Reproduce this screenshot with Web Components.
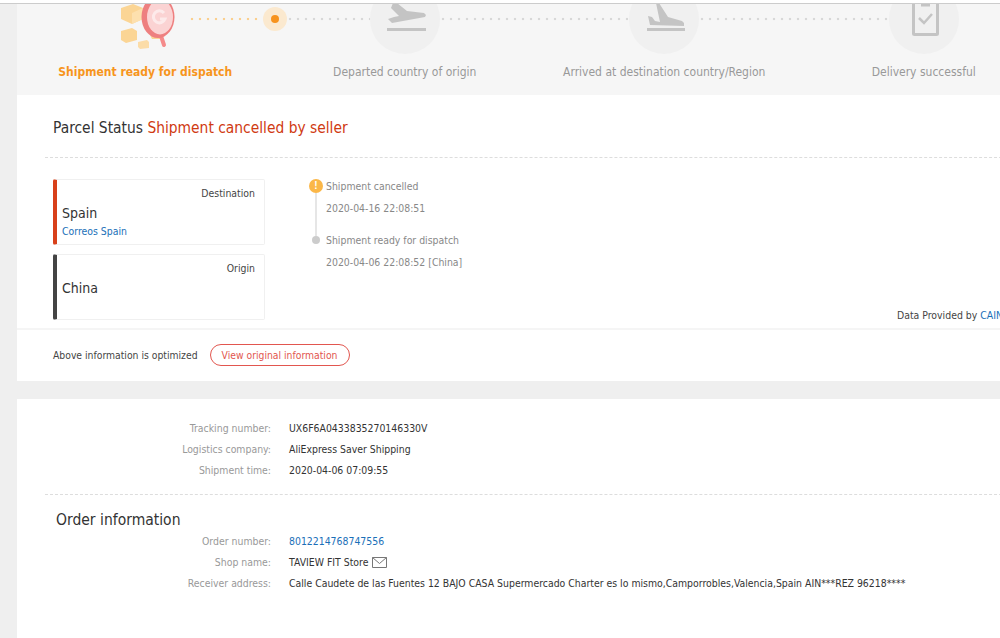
<!DOCTYPE html>
<html>
<head>
<meta charset="utf-8">
<title>Parcel tracking</title>
<style>
  html, body { margin: 0; height: 638px; overflow: hidden; background: #fff; }
  body { font-family: "DejaVu Sans Condensed", "DejaVu Sans", sans-serif; font-stretch: condensed; font-size: 12px; }
</style>
</head>
<body>
<tracking-page>
  <tracking-steps slot="upper"></tracking-steps>
  <parcel-card slot="upper">
    <route-card slot="routes" kind="Destination" country="Spain" carrier="Correos Spain" accent="#d8401a"></route-card>
    <route-card slot="routes" kind="Origin" country="China" accent="#444"></route-card>
    <track-event slot="events" state="alert" title="Shipment cancelled" time="2020-04-16 22:08:51"></track-event>
    <track-event slot="events" state="last" title="Shipment ready for dispatch" time="2020-04-06 22:08:52 [China]"></track-event>
  </parcel-card>
  <order-card slot="lower">
    <info-row slot="shipping" label="Tracking number:">UX6F6A0433835270146330V</info-row>
    <info-row slot="shipping" label="Logistics company:">AliExpress Saver Shipping</info-row>
    <info-row slot="shipping" label="Shipment time:">2020-04-06 07:09:55</info-row>
    <info-row slot="order" label="Order number:"><span style="color:#1a6fb8">8012214768747556</span></info-row>
    <info-row slot="order" label="Shop name:">TAVIEW FIT Store <svg width="15" height="11" viewBox="0 0 15 11" style="vertical-align:-2px;margin-left:1px" fill="none" stroke="#777"><path d="M.5.5h14v10H.5zM.5.5l7 6 7-6"/></svg></info-row>
    <info-row slot="order" label="Receiver address:">Calle Caudete de las Fuentes 12 BAJO CASA Supermercado Charter es lo mismo,Camporrobles,Valencia,Spain AIN***REZ 96218****</info-row>
  </order-card>
</tracking-page>

<script>
class TrackingPage extends HTMLElement {
  constructor() {
    super();
    this.attachShadow({ mode: 'open' });
    this.shadowRoot.innerHTML = `
      <style>
        :host { display: block; background: #efefef; height: 638px; }
        .topline { height: 3px; background: #fff; border-bottom: 1px solid #ccc; }
        .main { margin-left: 17px; display: flex; flex-direction: column; gap: 18px; width: 1040px; }
      </style>
      <div class="topline"></div>
      <div class="main">
        <div><slot name="upper"></slot></div>
        <slot name="lower"></slot>
      </div>
    `;
  }
}

class TrackingSteps extends HTMLElement {
  constructor() {
    super();
    this.attachShadow({ mode: 'open' });
    this.shadowRoot.innerHTML = `
      <style>
        :host { display: block; height: 91px; background: #f6f6f6; overflow: hidden; }
        .rail { display: flex; align-items: center; height: 70px; margin-top: -20px; padding-left: 93px; }
        .circle { width: 70px; height: 70px; flex: none; border-radius: 50%; background: #f0f0f0; }
        .circle svg, .pic { display: block; width: 70px; height: 70px; flex: none; }
        .dots { height: 4px; flex: none; background: radial-gradient(circle at 2px 2px, #d8d8d8 1.1px, transparent 1.6px) 0 0 / 8px 4px repeat-x; }
        .dots.on { background-image: radial-gradient(circle at 2px 2px, #fbcf8e 1.1px, transparent 1.6px); }
        .now { width: 24px; height: 24px; flex: none; border-radius: 50%; background: #fbe9cf; display: flex; align-items: center; justify-content: center; margin: 0 1px; }
        .now i { width: 8px; height: 8px; border-radius: 50%; background: #f7931e; }
        .labels { display: grid; grid-template-columns: repeat(4, 259.5px); margin: 10px 0 0 -1.5px; color: #999; font-size: 12px; line-height: 16px; text-align: center; white-space: nowrap; }
        .labels b { color: #f7951d; }
      </style>
      <div class="rail">
        <svg class="pic" viewBox="0 0 70 70">
          <path d="M11 24l12-4 10 4v11l-11 5-11-5z" fill="#fbd595"/>
          <path d="M22 29l11-5v11l-11 5z" fill="#fde0ae"/>
          <path d="M11 47l11-3 5 3v9l-11 3-5-3z" fill="#fbd595"/>
          <path d="M28 58l9-2 2 2v6l-9 1-2-2z" fill="#fbdca8"/>
          <path d="M40 51h10v4H42z" fill="#fbd595"/>
          <path d="M51 52l3 9" stroke="#f58b8b" stroke-width="4" stroke-linecap="round"/>
          <ellipse cx="48" cy="33" rx="16.5" ry="21" fill="#ee7f7f"/>
          <ellipse cx="50" cy="33" rx="13" ry="17.500" fill="#fbd3d3"/>
          <path d="M54 29a6 6 0 1 0 1 6h-5" fill="none" stroke="#fdeaea" stroke-width="3"/>
        </svg>
        <div class="dots on" style="width:72px;margin:0 0 0 10px"></div>
        <div class="now"><i></i></div>
        <div class="dots" style="width:82px"></div>
        <div class="circle">
          <svg viewBox="0 0 70 70" fill="#c4c4c4">
            <path d="M23 19h4l10 8 17 2 2 2-1 2-33 6-4-4 6-2 5-1-8-8z"/>
            <rect x="17" y="44" width="39" height="3"/>
          </svg>
        </div>
        <div class="dots" style="width:187px;margin-left:1px"></div>
        <div class="circle" style="margin-left:1px">
          <svg viewBox="0 0 70 70" fill="#c4c4c4">
            <path d="M27 19h3l9 14 14 4 2 2v3l-34-1-2-9 4 1 3 4 5 1z"/>
            <rect x="18" y="44" width="38" height="3"/>
          </svg>
        </div>
        <div class="dots" style="width:188px;margin-left:1px"></div>
        <div class="circle" style="margin-left:1px">
          <svg viewBox="0 0 70 70" fill="none" stroke="#c4c4c4">
            <rect x="24.500" y="17.500" width="24" height="33" rx="1" stroke-width="3"/>
            <path d="M32 20h9" stroke-width="5"/>
            <path d="M30 34l5 5 8-9" stroke-width="2.500"/>
          </svg>
        </div>
      </div>
      <div class="labels">
        <b>Shipment ready for dispatch</b>
        <span>Departed country of origin</span>
        <span>Arrived at destination country/Region</span>
        <span>Delivery successful</span>
      </div>
    `;
  }
}

class ParcelCard extends HTMLElement {
  constructor() {
    super();
    this.attachShadow({ mode: 'open' });
    this.shadowRoot.innerHTML = `
      <style>
        :host { display: block; background: #fff; height: 286px; }
        h2 { margin: 0; padding: 23px 0 0 36px; height: 39px; font-size: 15.4px; line-height: 20px; font-weight: 400; color: #333; white-space: nowrap; }
        h2 span { color: #d03a12; }
        .dash { margin-left: 28px; border-top: 1px dashed #ddd; }
        .body { display: flex; height: 170px; padding-left: 36px; position: relative; }
        .routes { width: 212px; padding-top: 21px; display: flex; flex-direction: column; gap: 9px; }
        .events { margin-left: 44px; padding-top: 21px; }
        .provider { position: absolute; left: 880px; bottom: 6px; font-size: 10.4px; line-height: 14px; color: #444; white-space: nowrap; }
        .provider a { color: #1a6fb8; }
        .note { border-top: 2px solid #f5f5f5; height: 50px; padding-left: 36px; display: flex; align-items: center; font-size: 10.3px; color: #444; }
        button { all: unset; box-sizing: border-box; margin-left: 12px; width: 140px; height: 22px; border: 1px solid #e2564f; border-radius: 11px; color: #e2564f; text-align: center; font-size: 10.3px; line-height: 20px; white-space: nowrap; }
      </style>
      <h2>Parcel Status <span>Shipment cancelled by seller</span></h2>
      <div class="dash"></div>
      <div class="body">
        <div class="routes"><slot name="routes"></slot></div>
        <div class="events"><slot name="events"></slot></div>
        <div class="provider">Data Provided by <a>CAINIAO</a></div>
      </div>
      <div class="note">Above information is optimized<button>View original information</button></div>
    `;
  }
}

class RouteCard extends HTMLElement {
  constructor() {
    super();
    this.attachShadow({ mode: 'open' });
    const carrier = this.getAttribute('carrier');
    this.shadowRoot.innerHTML = `
      <style>
        :host { display: block; box-sizing: border-box; height: 66px; border: 1px solid #f0f0f0; border-left: 4px solid ${this.getAttribute('accent')}; border-radius: 2px; padding: 6px 9px 0 5px; color: #333; }
        .kind { text-align: right; font-size: 10.4px; line-height: 14px; color: #444; }
        .country { margin-top: 3px; font-size: 14px; line-height: 20px; }
        .carrier { font-size: 10.4px; line-height: 14px; color: #1a6fb8; margin-top: 1px; }
      </style>
      <div class="kind">${this.getAttribute('kind')}</div>
      <div class="country">${this.getAttribute('country')}</div>
      ${carrier ? `<div class="carrier">${carrier}</div>` : ''}
    `;
  }
}

class TrackEvent extends HTMLElement {
  constructor() {
    super();
    this.attachShadow({ mode: 'open' });
    const alert = this.getAttribute('state') === 'alert';
    this.shadowRoot.innerHTML = `
      <style>
        :host { display: block; height: 54px; font-size: 10.4px; color: #888; white-space: nowrap; }
        .row { display: flex; height: 100%; }
        .mark { width: 14px; margin-right: 3px; flex: none; display: flex; flex-direction: column; align-items: center; }
        .dot { width: 8px; height: 8px; margin-top: 3px; border-radius: 50%; background: #ccc; }
        .alert { width: 14px; height: 14px; flex: none; border-radius: 50%; background: #fbb748; color: #fff; font: 700 10px/14px "Liberation Sans", sans-serif; text-align: center; }
        .line { flex: 1; width: 2px; margin-bottom: -3px; background: #e6e6e6; }
        .text div { line-height: 14px; }
        .text div + div { margin-top: 8px; }
      </style>
      <div class="row">
        <div class="mark">
          ${alert ? '<div class="alert">!</div><div class="line"></div>' : '<div class="dot"></div>'}
        </div>
        <div class="text">
          <div>${this.getAttribute('title')}</div>
          <div>${this.getAttribute('time')}</div>
        </div>
      </div>
    `;
  }
}

class OrderCard extends HTMLElement {
  constructor() {
    super();
    this.attachShadow({ mode: 'open' });
    this.shadowRoot.innerHTML = `
      <style>
        :host { display: block; background: #fff; height: 240px; }
        .shipping { padding-top: 18px; box-sizing: border-box; height: 95px; }
        .dash { margin-left: 28px; border-top: 1px dashed #ddd; }
        h3 { margin: 0; padding: 15px 0 0 39px; height: 20px; font-size: 15.500px; line-height: 20px; font-weight: 400; color: #333; }
      </style>
      <div class="shipping"><slot name="shipping"></slot></div>
      <div class="dash"></div>
      <h3>Order information</h3>
      <slot name="order"></slot>
    `;
  }
}

class InfoRow extends HTMLElement {
  constructor() {
    super();
    this.attachShadow({ mode: 'open' });
    this.shadowRoot.innerHTML = `
      <style>
        :host { display: flex; height: 21px; align-items: center; font-size: 10.4px; color: #333; white-space: nowrap; }
        .label { width: 254px; flex: none; text-align: right; color: #999; margin-right: 18px; }
      </style>
      <div class="label">${this.getAttribute('label')}</div>
      <div><slot></slot></div>
    `;
  }
}

customElements.define('tracking-page', TrackingPage);
customElements.define('tracking-steps', TrackingSteps);
customElements.define('parcel-card', ParcelCard);
customElements.define('route-card', RouteCard);
customElements.define('track-event', TrackEvent);
customElements.define('order-card', OrderCard);
customElements.define('info-row', InfoRow);
</script>
</body>
</html>
